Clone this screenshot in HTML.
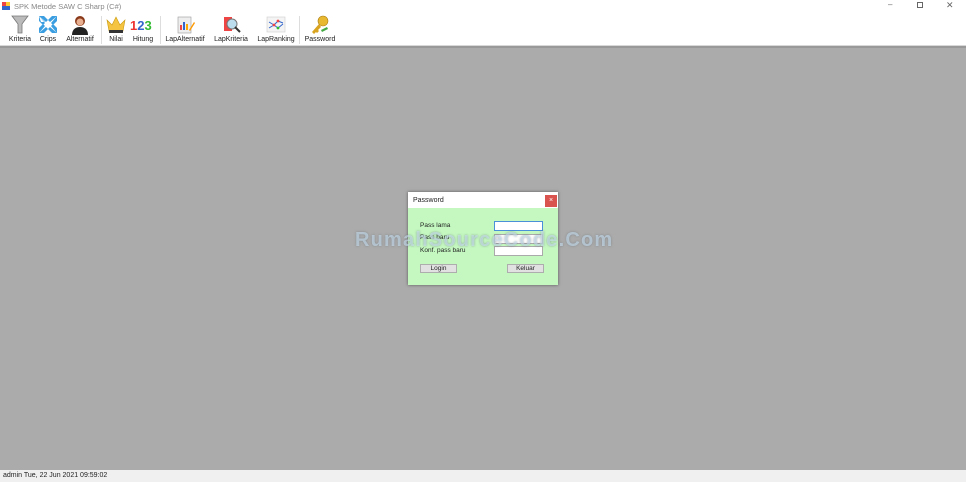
<!DOCTYPE html>
<html><head><meta charset="utf-8"><style>
*{margin:0;padding:0;box-sizing:border-box}
body{width:966px;height:482px;overflow:hidden;background:#ababab;font-family:"Liberation Sans",sans-serif;position:relative}
.title{position:absolute;left:0;top:0;width:966px;height:13px;background:#fff;font-size:7.5px;color:#888}
.tb{position:absolute;left:0;top:13px;width:966px;height:33px;background:#fff;border-bottom:1px solid #d8d8d8}
.gl{position:absolute;left:0;top:46px;width:966px;height:2px;background:#999}
.btn{position:absolute;top:0;height:33px;text-align:center;font-size:7px;color:#222}
.btn svg{display:block;margin:1px auto 0;width:22px;height:21px}
.btn span{display:block;margin-top:1px}
.sep{position:absolute;top:3px;width:1px;height:28px;background:#ddd}
.status{position:absolute;left:0;top:470px;width:966px;height:12px;background:#f0f0f0;font-size:7px;color:#222;padding:2px 0 0 3px}
.dlg{position:absolute;left:408px;top:192px;width:150px;height:93px;background:#c4f8c0;box-shadow:0 0 3px rgba(0,0,0,.5)}
.dt{height:16px;background:#fff;font-size:7px;padding:5px 0 0 5px;color:#222}
.x{position:absolute;left:137px;top:3px;width:12px;height:12px;background:#d9534f;color:#fff;font-size:7px;text-align:center;line-height:12px}
.lb{position:absolute;font-size:6.5px;color:#222}
.in{position:absolute;left:86px;width:49px;height:10px;background:#fff;border:1px solid #aaa}
.b{position:absolute;top:72px;height:9px;background:#e1e1e1;border:1px solid #adadad;font-size:6.5px;text-align:center;line-height:8px;color:#222}
.wm{position:absolute;left:355px;top:229px;font-size:20px;font-weight:bold;color:rgba(205,228,245,.6);letter-spacing:1.2px;text-shadow:0 0 2px rgba(90,100,110,.5)}
</style></head><body>
<div class="title"><svg style="position:absolute;left:2px;top:2px" width="9" height="8"><rect x="0" y="0" width="4" height="4" fill="#e44"/><rect x="4" y="0" width="4" height="4" fill="#fc3"/><rect x="0" y="4" width="8" height="4" fill="#36c"/></svg><span style="position:absolute;left:14px;top:2px">SPK Metode SAW C Sharp (C#)</span>
<span style="position:absolute;left:888px;top:0;font-size:8px;color:#666">–</span>
<span style="position:absolute;left:917px;top:2px;width:6px;height:6px;border:1px solid #666"></span>
<span style="position:absolute;left:946px;top:0;font-size:9px;color:#666">✕</span></div>
<div class="tb">
<div class="btn" style="left:4px;width:32px"><svg viewBox="0 0 22 21"><path d="M3 2h16l-6 8v9h-4v-9z" fill="#bbb" stroke="#777" stroke-width=".8"/></svg><span>Kriteria</span></div>
<div class="btn" style="left:36px;width:24px"><svg viewBox="0 0 22 21"><g fill="#3a9ee0"><path d="M2 2l6 6-4 0 0 0z M2 2h5l4 4-2 2z M2 2v5l4 4 2-2z"/><path d="M20 2h-5l-4 4 2 2z M20 2v5l-4 4-2-2z"/><path d="M2 19h5l4-4-2-2z M2 19v-5l4-4 2 2z"/><path d="M20 19h-5l-4-4 2-2z M20 19v-5l-4-4-2 2z"/></g></svg><span>Crips</span></div>
<div class="btn" style="left:62px;width:36px"><svg viewBox="0 0 22 21"><circle cx="11" cy="7" r="5" fill="#8a3a1a"/><circle cx="11" cy="8" r="3.5" fill="#e8b090"/><path d="M3 21c0-6 4-8 8-8s8 2 8 8z" fill="#222"/></svg><span>Alternatif</span></div>
<div class="sep" style="left:101px"></div>
<div class="btn" style="left:104px;width:24px"><svg viewBox="0 0 22 21"><path d="M2 6l5 5 4-8 4 8 5-5-2 11H4z" fill="#f5c542" stroke="#c89a10" stroke-width=".6"/><rect x="4" y="16" width="14" height="3" fill="#333"/></svg><span>Nilai</span></div>
<div class="btn" style="left:128px;width:30px"><svg viewBox="0 0 26 21" style="width:26px"><text x="0" y="16" font-family="Liberation Sans" font-size="13" font-weight="bold"><tspan fill="#e33">1</tspan><tspan fill="#36c">2</tspan><tspan fill="#3b3">3</tspan></text></svg><span>Hitung</span></div>
<div class="sep" style="left:160px"></div>
<div class="btn" style="left:162px;width:46px"><svg viewBox="0 0 22 21"><rect x="4" y="3" width="13" height="16" fill="#eee" stroke="#999" stroke-width=".6"/><rect x="6" y="11" width="2" height="5" fill="#e44"/><rect x="9" y="8" width="2" height="8" fill="#36c"/><rect x="12" y="10" width="2" height="6" fill="#fa0"/><path d="M15 16l5-8 1 1-5 8z" fill="#f90"/></svg><span>LapAlternatif</span></div>
<div class="btn" style="left:211px;width:40px"><svg viewBox="0 0 22 21"><rect x="4" y="3" width="8" height="14" fill="#e44"/><circle cx="12" cy="10" r="5" fill="#bde" stroke="#777"/><path d="M15 13l5 5" stroke="#333" stroke-width="2"/></svg><span>LapKriteria</span></div>
<div class="btn" style="left:254px;width:44px"><svg viewBox="0 0 22 21"><rect x="2" y="3" width="18" height="15" fill="#f4f4f4" stroke="#ccc" stroke-width=".6"/><path d="M4 8l5 3 4-4 5 2M4 14l5-3 4 3 5-4" stroke="#36c" fill="none"/><circle cx="9" cy="11" r="1.4" fill="#e44"/><circle cx="13" cy="7" r="1.4" fill="#e44"/><circle cx="13" cy="14" r="1.4" fill="#3b3"/></svg><span>LapRanking</span></div>
<div class="sep" style="left:299px"></div>
<div class="btn" style="left:301px;width:38px"><svg viewBox="0 0 22 21"><circle cx="14" cy="7" r="5" fill="#e8b830" stroke="#a87a10" stroke-width=".6"/><path d="M10 10l-7 8 2 2 2-2 1 1 2-2-1-1 3-3z" fill="#d9a420"/><path d="M12 16l6-3 1 2-6 3z" fill="#4a4"/></svg><span>Password</span></div>
</div>
<div class="gl"></div>
<div class="dlg">
<div class="dt">Password</div><div class="x">×</div>
<div class="lb" style="left:12px;top:30px">Pass lama</div>
<div class="lb" style="left:12px;top:42px">Pass baru</div>
<div class="lb" style="left:12px;top:55px">Konf. pass baru</div>
<div class="in" style="top:29px;border-color:#4a90d9"></div>
<div class="in" style="top:42px"></div>
<div class="in" style="top:54px"></div>
<div class="b" style="left:12px;width:37px">Login</div>
<div class="b" style="left:99px;width:37px">Keluar</div>
</div>
<div class="wm">RumahSourceCode.Com</div>
<div class="status">admin Tue, 22 Jun 2021 09:59:02</div>
</body></html>
